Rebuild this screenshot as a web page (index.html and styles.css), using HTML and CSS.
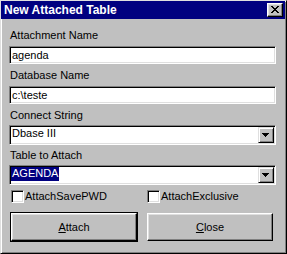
FILE: index.html
```html
<!DOCTYPE html>
<html lang="en">
<head>
    <meta charset="UTF-8">
    <title>New Attached Table</title>
    <link rel="stylesheet" href="styles.css">
</head>
<body>
    <div class="window">
        <div class="titlebar">
            <span class="title">New Attached Table</span>
            <button class="close-btn" type="button">
                <svg width="8" height="7" viewBox="0 0 8 7" shape-rendering="crispEdges">
                    <path d="M0 0h2v1h1v1h2v-1h1v-1h2v1h-1v1h-1v1h-1v1h1v1h1v1h1v1h-2v-1h-1v-1h-2v1h-1v1h-2v-1h1v-1h1v-1h1v-1h-1v-1h-1v-1h-1z" fill="#000"/>
                </svg>
            </button>
        </div>

        <form class="dialog">
            <div class="field">
                <label class="field-label">Attachment Name</label>
                <div class="edit">agenda</div>
            </div>
            <div class="field">
                <label class="field-label">Database Name</label>
                <div class="edit">c:\teste</div>
            </div>
            <div class="field combo-field">
                <label class="field-label">Connect String</label>
                <div class="combo">
                    <span class="combo-value">Dbase III</span>
                    <span class="drop-btn">
                        <svg width="8" height="4" viewBox="0 0 8 4" shape-rendering="crispEdges">
                            <path d="M0 0H7V1H6V2H5V3H4V4H3V3H2V2H1V1H0Z" fill="#000"/>
                        </svg>
                    </span>
                </div>
            </div>
            <div class="field combo-field tight">
                <label class="field-label">Table to Attach</label>
                <div class="combo">
                    <span class="combo-value"><span class="selected">AGENDA</span></span>
                    <span class="drop-btn">
                        <svg width="8" height="4" viewBox="0 0 8 4" shape-rendering="crispEdges">
                            <path d="M0 0H7V1H6V2H5V3H4V4H3V3H2V2H1V1H0Z" fill="#000"/>
                        </svg>
                    </span>
                </div>
            </div>

            <div class="options">
                <div class="check"><span class="check-box"></span><span>AttachSavePWD</span></div>
                <div class="check"><span class="check-box"></span><span>AttachExclusive</span></div>
            </div>

            <div class="actions">
                <button type="button" class="btn btn-default"><u>A</u>ttach</button>
                <button type="button" class="btn"><u>C</u>lose</button>
            </div>
        </form>
    </div>
</body>
</html>
```

FILE: styles.css
```css
body {
    margin: 0;
    font-family: "Liberation Sans", Arial, sans-serif;
    font-size: 11px;
    color: #000;
}
.window {
    width: 287px;
    height: 254px;
    box-sizing: border-box;
    background: #c0c0c0;
    border: 1px solid;
    border-color: #dfdfdf #000 #000 #dfdfdf;
    box-shadow: inset 1px 1px #fff, inset -1px -1px #808080;
}
.titlebar {
    height: 18px;
    margin-right: 1px;
    background: #000080;
    display: flex;
    justify-content: space-between;
    align-items: flex-start;
}
.title {
    color: #fff;
    font-weight: bold;
    font-size: 12px;
    line-height: 19px;
    padding-left: 3px;
}
.close-btn {
    width: 16px;
    height: 14px;
    margin: 2px 2px 0 0;
    padding: 0 1px 1px 0;
    box-sizing: border-box;
    background: #c0c0c0;
    border: 1px solid;
    border-color: #fff #000 #000 #fff;
    box-shadow: inset -1px -1px #808080, inset 1px 1px #dfdfdf;
    display: flex;
    align-items: center;
    justify-content: center;
}
.close-btn svg {
    display: block;
}
.dialog {
    padding: 10px 0 0 8px;
}
.field {
    display: flex;
    flex-direction: column;
    gap: 4px;
}
.field + .field {
    margin-top: 5px;
}
.combo-field {
    gap: 3px;
}
.field.tight {
    margin-top: 4px;
}
.field-label {
    height: 13px;
    line-height: 13px;
    padding-left: 1px;
}
.edit, .combo, .check-box {
    background: #fff;
    border: 1px solid;
    border-color: #808080 #fff #fff #808080;
    box-shadow: inset 1px 1px #000, inset -1px -1px #dfdfdf;
    box-sizing: border-box;
}
.edit {
    width: 267px;
    height: 18px;
    padding: 1px 2px 0;
    line-height: 14px;
}
.combo {
    width: 267px;
    height: 20px;
    padding: 1px;
    display: flex;
    justify-content: space-between;
}
.combo-value {
    padding-left: 1px;
    line-height: 13px;
}
.selected {
    display: inline-block;
    height: 14px;
    margin-left: -1px;
    padding: 0 1px;
    background: #000080;
    color: #fff;
}
.drop-btn {
    width: 16px;
    height: 16px;
    box-sizing: border-box;
    background: #c0c0c0;
    border: 1px solid;
    border-color: #dfdfdf #000 #000 #dfdfdf;
    box-shadow: inset 1px 1px #fff, inset -1px -1px #808080;
    display: flex;
    align-items: center;
    justify-content: center;
}
.drop-btn svg {
    display: block;
}
.options, .actions {
    display: grid;
    grid-template-columns: 126px 126px;
    column-gap: 10px;
    padding-left: 2px;
}
.options {
    margin-top: 5px;
}
.check {
    display: flex;
    align-items: center;
    gap: 1px;
    height: 13px;
    line-height: 13px;
}
.check-box {
    width: 13px;
    height: 13px;
}
.actions {
    margin-top: 10px;
}
.btn {
    height: 28px;
    padding: 0;
    font-family: inherit;
    font-size: 11px;
    color: #000;
    background: #c0c0c0;
    border: 1px solid;
    border-color: #fff #000 #000 #fff;
    box-shadow: inset -1px -1px #808080, inset 1px 1px #dfdfdf;
}
.btn-default {
    outline: 1px solid #000;
}
```
